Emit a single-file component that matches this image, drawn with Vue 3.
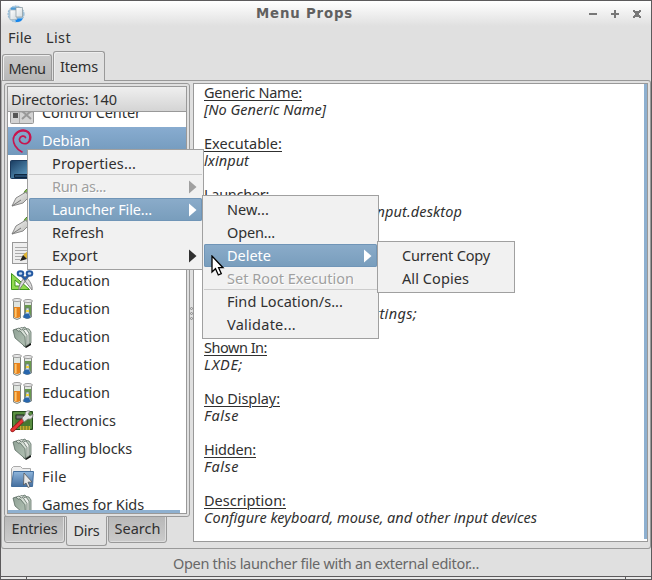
<script setup>
// Keeps a label at its designed width by spreading the difference over its letters.
const vFit = {
  mounted(el, { value }) {
    const natural = el.getBoundingClientRect().width
    el.style.letterSpacing = (value - natural) / el.textContent.length + 'px'
  },
}

const rows = [
  { name: 'Control Center', icon: 'control', w: 99 },
  { name: 'Debian', icon: 'debian', w: 48, selected: true },
  { name: '', icon: 'desktop', w: 0 },
  { name: '', icon: 'draw', w: 0 },
  { name: '', icon: 'draw', w: 0 },
  { name: '', icon: 'editor', w: 0 },
  { name: 'Education', icon: 'geometry', w: 68 },
  { name: 'Education', icon: 'science', w: 68 },
  { name: 'Education', icon: 'folders', w: 68 },
  { name: 'Education', icon: 'science', w: 68 },
  { name: 'Education', icon: 'science', w: 68 },
  { name: 'Electronics', icon: 'electronics', w: 74 },
  { name: 'Falling blocks', icon: 'folders', w: 90 },
  { name: 'File', icon: 'file', w: 25 },
  { name: 'Games for Kids', icon: 'folders', w: 102 },
]

const details = [
  { label: 'Generic Name:', lw: 98, value: '[No Generic Name]', vw: 122 },
  { label: 'Executable:', lw: 78, value: 'lxinput', vw: 45 },
  { label: 'Launcher:', lw: 65, value: '/usr/share/applications/lxinput.desktop', vw: 258 },
  { label: 'Icon:', lw: 32, value: 'input-keyboard', vw: 101 },
  { label: 'Categories:', lw: 78, value: 'GTK;Settings;HardwareSettings;', vw: 213 },
  { label: 'Shown In:', lw: 63, value: 'LXDE;', vw: 39 },
  { label: 'No Display:', lw: 76, value: 'False', vw: 35 },
  { label: 'Hidden:', lw: 52, value: 'False', vw: 35 },
  { label: 'Description:', lw: 82, value: 'Configure keyboard, mouse, and other input devices', vw: 333 },
]

const menus = [
  {
    id: 'first',
    items: [
      { t: 'Properties...', w: 84 },
      { t: 'Run as...', w: 54, disabled: true, sub: true, sep: true },
      { t: 'Launcher File...', w: 100, active: true, sub: true },
      { t: 'Refresh', w: 52 },
      { t: 'Export', w: 46, sub: true },
    ],
  },
  {
    id: 'second',
    items: [
      { t: 'New...', w: 42 },
      { t: 'Open...', w: 48 },
      { t: 'Delete', w: 44, active: true, sub: true },
      { t: 'Set Root Execution', w: 127, disabled: true },
      { t: 'Find Location/s...', w: 116, sep: true },
      { t: 'Validate...', w: 69 },
    ],
  },
  {
    id: 'third',
    items: [
      { t: 'Current Copy', w: 88 },
      { t: 'All Copies', w: 67 },
    ],
  },
]
</script>

<template>
  <div class="window">
    <svg class="defs" width="0" height="0">
      <defs>
        <linearGradient id="blue" x2="0" y2="1"><stop stop-color="#8fb5db" /><stop offset="1" stop-color="#456f9f" /></linearGradient>
        <linearGradient id="navy" x2="1" y2="1"><stop stop-color="#183b60" /><stop offset="1" stop-color="#6eb0d6" /></linearGradient>
        <linearGradient id="gray" x2="1" y2="1"><stop stop-color="#f8f8f8" /><stop offset="1" stop-color="#b4b4b0" /></linearGradient>
        <linearGradient id="sage" x2="1" y2="1"><stop stop-color="#8fa195" /><stop offset="1" stop-color="#b3c2b5" /></linearGradient>
        <linearGradient id="paper" x2="1" y2="1"><stop stop-color="#fff" /><stop offset="1" stop-color="#d3dade" /></linearGradient>
      </defs>
    </svg>

    <header class="title">
      <svg class="appicon" width="18" height="18" viewBox="0 0 18 18">
        <circle cx="9" cy="9" r="8" fill="#a9cbe2" stroke="#8db4d0" stroke-dasharray="2 1" />
        <path d="M8 13.500h8Q14 17.500 9 17z" fill="#1686ed" /><path d="M4 2.500h5v4H4z" fill="#4a9bd8" />
        <path d="M3 5h7v9.500H3z" fill="url(#paper)" stroke="#a5b3bb" stroke-width=".7" />
        <path d="M9 2.500h6.500v9.500H9z" fill="url(#paper)" stroke="#87979e" stroke-width=".7" />
      </svg>
      <b v-fit="97">Menu Props</b>
      <svg class="controls" width="56" height="10" viewBox="0 0 56 10" fill="#777" shape-rendering="crispEdges">
        <path d="M1 4h8v2H1zM23 4h8v2h-8zM26 1h2v8h-2z" />
        <path d="M45 1h2v1h4V1h2v2h-1v1h-1v2h1v1h1v2h-2V8h-4v1h-2V7h1V6h1V4h-1V3h-1z" />
      </svg>
    </header>

    <nav class="menubar"><span v-fit="24">File</span><span v-fit="25">List</span></nav>

    <div class="tabs">
      <div class="tab back"><span v-fit="37">Menu</span></div>
      <div class="tab front"><span v-fit="38">Items</span></div>
    </div>

    <main class="page">
      <section class="left">
        <div class="book">
          <div class="tree">
            <div class="head"><span v-fit="106">Directories: 140</span></div>
            <div class="viewport">
              <div v-for="(r, i) in rows" :key="i" class="row" :class="{ selected: r.selected }">
                <svg width="24" height="24" viewBox="0 0 24 24">
                  <g v-if="r.icon === 'control'">
                    <rect x=".5" y="2.500" width="23" height="20" rx="1" fill="#d3d3d3" stroke="#969696" />
                    <path d="M9.500 3v19M1 11h22" stroke="#aaa" /><path d="M3 12h5v5H3z" fill="#555" />
                    <path d="M12 18l9-8M12 10l9 8" stroke="#999" stroke-width="2" />
                  </g>
                  <g v-else-if="r.icon === 'debian'" fill="none" stroke="#c7164f" stroke-linecap="round">
                    <path d="M12 23C6 20 2.500 14 3.500 9" stroke-width="1.600" />
                    <path d="M3.500 9C5 3 12 0 17 2.500c5 3 4.500 9 .5 11.500-4 2-8.500-.5-8-4 .5-3 5-4 6-1.500" stroke-width="1.700" />
                    <path d="M5 6c3-5 9-6 13-3 2.500 2.500 2.500 5.500 1.500 8" stroke-width="2" />
                  </g>
                  <g v-else-if="r.icon === 'desktop'">
                    <rect x=".5" y="3.500" width="23" height="18" rx="1" fill="url(#navy)" stroke="#1c395b" />
                    <path d="M4.500 17.500h19v3h-19z" fill="#254a6d" stroke="#0e273f" />
                  </g>
                  <g v-else-if="r.icon === 'draw'">
                    <path d="M14 8q2-6 9-4-2 5-6 6z" fill="#86bd54" stroke="#477b21" />
                    <path d="m2 21 4-8 10-6 3 5-6 6z" fill="url(#gray)" stroke="#888" /><path d="m2 21 9-6" stroke="#777" />
                  </g>
                  <g v-else-if="r.icon === 'editor'">
                    <rect x="2.500" y="1.500" width="20" height="21" fill="#eee" stroke="#999" />
                    <path d="M5 6.500h13M5 9.500h13M5 12.500h13M5 15.500h7M5 18.500h5" stroke="#aaa" />
                    <path d="m11 19 3-6 8-6 2 3-8 8z" fill="#dfb434" /><path d="m10 20 3-6 4 4z" fill="#222" />
                  </g>
                  <g v-else-if="r.icon === 'geometry'">
                    <path d="M1.500 4.500v16h18z" fill="#91da50" stroke="#3e941b" /><path d="M5 11v6h7z" fill="#fff" stroke="#3e941b" />
                    <path d="m11 7 11 14c1-5-3-10-6-13zM19 7 9 21c-1-4 3-10 6-13z" fill="#ddd" stroke="#777" stroke-width=".9" />
                    <ellipse cx="10.500" cy="4.500" rx="2.800" ry="2.300" fill="#c7d9ef" stroke="#2459a2" stroke-width="2" />
                    <ellipse cx="19.500" cy="4.500" rx="2.800" ry="2.300" fill="#c7d9ef" stroke="#2459a2" stroke-width="2" />
                    <path d="m12 7 3 3 3-3" fill="none" stroke="#2459a2" stroke-width="2" />
                  </g>
                  <g v-else-if="r.icon === 'science'">
                    <path d="M3.500 3h7v18q-3.500 3-7 0zM14.500 4h7v16q-3.500 3-7 0z" fill="#dfe4df" stroke="#858b84" />
                    <ellipse cx="7" cy="3" rx="4.500" ry="1.500" fill="#eee" stroke="#999" />
                    <ellipse cx="18" cy="4" rx="4.500" ry="1.500" fill="#eee" stroke="#999" />
                    <path d="M4 10h6v10q-3 2-6 0z" fill="#e7831c" /><path d="M5.700 11v9" stroke="#ffc66c" stroke-width="1.800" />
                    <path d="M15 8h6v11h-6z" fill="#68994d" /><path d="M16 11h3v4l2 5q-4 3-8 0l3-5z" fill="#d9e5e9" stroke="#6b7c82" stroke-width=".8" />
                    <path d="m14 18 1.500-1.500H19l1.500 4q-3.500 2-7 0" fill="#2866ad" />
                    <path d="M16 13h3v2h-3z" fill="#efcf3b" />
                  </g>
                  <g v-else-if="r.icon === 'folders'" stroke="#4e5e54" stroke-width=".7" stroke-linejoin="round">
                    <path d="m13 20 8-3v3l-5 3z" fill="#111" stroke="none" />
                    <path d="m12 3 3-1 1 1.500L19 4l2 3v11l-4 2z" fill="#c1cec3" />
                    <path d="m9 3.500 3-1 2 2 2-.5 3 4v11l-3 2z" fill="#eef1ed" />
                    <path d="m6 4 3-1 2 2 2-.5 4 6v10l-3 1z" fill="#d6dfd6" />
                    <path d="m3 5 3-1 2 2.200 2-.4 5 6 .5 10.200L5 13z" fill="url(#sage)" />
                  </g>
                  <g v-else-if="r.icon === 'electronics'">
                    <path d="M2.500 2.500h20v18h-20z" fill="#477832" stroke="#234a1b" /><path d="M4 4h17v15H4z" fill="none" stroke="#6ba14e" />
                    <path d="M6 6h8v4H6z" fill="#777" stroke="#253027" /><path d="M10 17h10v4H10z" fill="#c5aa2f" /><path d="M12 17v4M15 17v4M18 17v4" stroke="#54721c" />
                    <path d="m2.500 21 10.500-10" stroke="#941818" stroke-width="4.300" stroke-linecap="round" /><path d="m2.500 21 10.500-10" stroke="#e53737" stroke-width="2.800" stroke-linecap="round" />
                    <path d="m12 9 3-3q0-5 5-4l-2 3 2 2 3-2q0 6-5 5l-4 3z" fill="#e4e5e4" stroke="#777" stroke-width=".8" />
                  </g>
                  <g v-else>
                    <path d="M1.500 21V3.500l2-2h7l2 2h8v17" fill="#eee" stroke="#aaa" />
                    <path d="M3.500 6.500h20l-1 15h-21z" fill="url(#blue)" stroke="#426e9e" />
                    <path d="m14 8 8 9-4 .2 2 4.300-2 1-2-4.500-2.500 2z" fill="#e7e7e7" stroke="#555" stroke-width=".8" />
                  </g>
                </svg>
                <span v-if="r.name" v-fit="r.w">{{ r.name }}</span>
              </div>
              <div class="overshoot"></div>
            </div>
          </div>
        </div>
        <div class="bottomtabs">
          <div class="btab entries"><span v-fit="46">Entries</span></div>
          <div class="btab dirs"><span v-fit="26">Dirs</span></div>
          <div class="btab search"><span v-fit="46">Search</span></div>
        </div>
      </section>
      <div class="grip"><i></i><i></i><i></i></div>
      <section class="details">
        <div class="text">
          <div v-for="d in details" :key="d.label" class="entry">
            <div><u v-fit="d.lw">{{ d.label }}</u></div>
            <div><em v-fit="d.vw">{{ d.value }}</em></div>
          </div>
        </div>
        <div class="edge"></div>
      </section>
    </main>

    <footer class="status"><span v-fit="306">Open this launcher file with an external editor...</span></footer>
    <div class="handle"><i></i><i></i></div>

    <div v-for="m in menus" :key="m.id" class="popup" :class="m.id">
      <div v-for="it in m.items" :key="it.t" class="item" :class="{ active: it.active, disabled: it.disabled, sep: it.sep }">
        <span v-fit="it.w">{{ it.t }}</span>
        <svg v-if="it.sub" width="8" height="14" viewBox="0 0 8 14"><path d="M0 .5 7.500 7 0 13.500z" fill="currentColor" /></svg>
      </div>
    </div>

    <svg class="cursor" width="15" height="22" viewBox="0 0 15 22">
      <path d="M1 1v16l3.500-3.300L7.300 20l3-1.300-2.700-6H12z" fill="#fff" stroke="#000" stroke-width="1.300" />
    </svg>
  </div>
</template>

<style>
body { margin: 0; overflow: hidden; }
</style>

<style scoped>
* { box-sizing: border-box; }
.window { position: relative; width: 652px; height: 580px; display: flex; flex-direction: column; overflow: hidden; background: #e0e0e0; border: 1px solid #5c5a5c; border-bottom: 0; color: #303030; font: 14.5px/17px "Noto Sans", "Open Sans", sans-serif; white-space: nowrap; }
.defs { position: absolute; }
.title { height: 25px; flex: none; display: grid; grid-template-columns: 60px 1fr 66px; align-items: center; background: linear-gradient(#fff, #e0e0e0); }
.title b { justify-self: center; font: bold 13.300px/17px "DejaVu Sans", sans-serif; color: #606060; margin-right: 37px; }
.appicon { margin-left: 6px; }
.controls { margin-left: 3px; }
.menubar { height: 24px; flex: none; display: flex; gap: 14px; align-items: center; padding: 0 7px 2px; }
.tabs { height: 30px; flex: none; display: flex; align-items: flex-end; gap: 1px; padding-left: 1px; position: relative; z-index: 1; }
.tab { border: 1px solid #999; border-bottom: 0; border-radius: 3px 3px 0 0; display: flex; justify-content: center; align-items: center; box-shadow: inset 1px 1px #eee; }
.back { width: 50px; height: 26px; background: linear-gradient(#c9c9c9, #b8b8b8); padding-top: 1px; }
.front { width: 52px; height: 30px; margin-bottom: -1px; background: #e1e1e1; }
.page { height: 469px; flex: none; display: flex; border: 1px solid #999; border-left-color: #aaa; border-radius: 0 3px 3px 3px; padding: 2px 2px 0; }
.left { width: 186px; display: flex; flex-direction: column; }
.book { height: 434px; border: 1px solid #999; border-radius: 3px; padding: 2px; }
.tree { height: 428px; border: 1px solid #999; background: #fff; display: flex; flex-direction: column; }
.head { height: 25px; flex: none; padding: 4px 3px; border-bottom: 1px solid #999; background: linear-gradient(#efefef, #d4d4d4); }
.viewport { flex: 1; overflow: hidden; position: relative; display: flex; flex-direction: column; }
.row { height: 28px; flex: none; display: flex; align-items: center; gap: 8px; padding-left: 2px; }
.row span { padding-bottom: 2px; }
.row:first-child { margin-top: -13px; }
.selected { background: linear-gradient(#88acd0, #7299bc); color: #fff; }
.overshoot { position: absolute; left: 0; bottom: 0; width: 172px; height: 3px; background: #8eb0d0; }
.bottomtabs { height: 30px; display: flex; align-items: flex-start; gap: 1px; margin-top: -1px; }
.btab { border: 1px solid #999; border-radius: 0 0 3px 3px; display: flex; justify-content: center; align-items: center; background: linear-gradient(#b8b8b8, #cbcbcb); height: 27px; padding-bottom: 2px; box-shadow: inset -1px -1px #ddd; }
.entries { width: 61px; }
.dirs { width: 41px; height: 30px; background: #e0e0e0; border-top-color: #e0e0e0; box-shadow: none; }
.search { width: 59px; }
.grip { width: 3px; display: flex; flex-direction: column; justify-content: center; gap: 2px; padding-bottom: 4px; }
.grip i { width: 3px; height: 3px; border: 1px solid #888; border-radius: 50%; }
.details { height: 459px; flex: 1; background: #fff; border: 1px solid #999; display: flex; justify-content: space-between; }
.text { padding-left: 10px; }
.entry { height: 51px; }
.entry div { height: 17px; }
.entry u { text-decoration-thickness: 1px; text-underline-offset: 2px; }
.edge { width: 3px; height: 455px; background: #8eb0d0; }
.status { height: 27px; flex: none; display: flex; justify-content: center; padding-top: 6px; color: #686868; }
.handle { height: 4px; flex: none; border-top: 1px solid #5c5a5c; border-bottom: 1px solid #5c5a5c; background: #e8e8e8; display: flex; justify-content: space-between; padding: 0 25px; }
.handle i { width: 1px; background: #5c5a5c; }
.popup { position: absolute; border: 1px solid #a0a0a0; background: #f1f1f1; padding: 2px 1px; z-index: 3; }
.first { left: 26px; top: 148px; width: 177px; }
.second { left: 201px; top: 194px; width: 177px; }
.third { left: 376px; top: 240px; width: 138px; }
.item { height: 23px; display: flex; align-items: center; justify-content: space-between; padding: 0 5px 0 23px; border-radius: 2px; }
.active { color: #fff; background: linear-gradient(#8bacca, #789dbc); box-shadow: inset 0 0 0 1px #7095b7; }
.disabled { color: #a0a0a0; text-shadow: 1px 1px #fff; }
.sep { box-shadow: 0 -1px #ccc; border-radius: 0; }
.cursor { position: absolute; left: 210px; top: 254px; z-index: 4; }
</style>
